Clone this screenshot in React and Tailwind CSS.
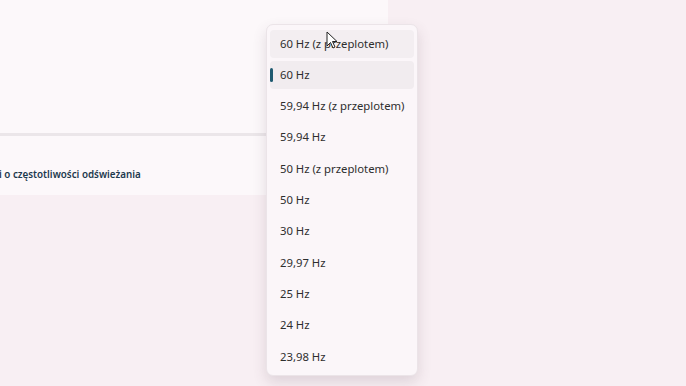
import React from 'react'

const rates = [
  '60 Hz (z przeplotem)',
  '60 Hz',
  '59,94 Hz (z przeplotem)',
  '59,94 Hz',
  '50 Hz (z przeplotem)',
  '50 Hz',
  '30 Hz',
  '29,97 Hz',
  '25 Hz',
  '24 Hz',
  '23,98 Hz',
]

function Cursor() {
  return (
    <svg className="absolute left-[326px] top-[31px]" width="12" height="18" viewBox="0 0 12 18">
      <path d="M1 1 L1 15 L4.5 11.5 L7 17 L9 16 L6.5 10.5 L11 10.5 Z" fill="#ffffff" stroke="#222" strokeWidth="1" strokeLinejoin="round" />
    </svg>
  )
}

export default function App() {
  return (
    <div
      className="relative w-[686px] h-[386px] overflow-hidden bg-[#f8eff3]"
      style={{ fontFamily: '"Noto Sans", "Open Sans", sans-serif' }}
    >
      {/* settings panel behind the flyout */}
      <div className="w-[388px] flex flex-col">
        <div className="h-[133px] bg-[#fcf8fa]"></div>
        <div className="h-[3px] bg-[#ebe6e9]"></div>
        <div className="h-[59px] bg-[#fcf8fa] flex items-center pt-[19px]">
          <span className="ml-[-1px] text-[9.8px] font-semibold text-[#1d3a4e] whitespace-nowrap">
            i o częstotliwości odświeżania
          </span>
        </div>
      </div>

      {/* flyout */}
      <div className="absolute left-[266px] top-[24px] w-[152px] h-[352px] rounded-[7px] bg-[#fbf6f9] border border-[#ebe4e8] shadow-[0_6px_14px_rgba(90,60,80,0.16)] px-[3px] pt-[5px] flex flex-col gap-[3.3px]">
        {rates.map((r, i) => (
          <div
            key={r}
            className={`relative h-[28px] shrink-0 rounded-[4px] flex items-center pl-[10px] text-[11.3px] text-[#2e2e2e] whitespace-nowrap ${
              i === 0 ? 'bg-[#f3eef1]' : i === 1 ? 'bg-[#f1ecef]' : ''
            }`}
          >
            {i === 1 && (
              <span className="absolute left-0 top-[7px] w-[3px] h-[14px] rounded-full bg-[#1f5a70]"></span>
            )}
            {r}
          </div>
        ))}
      </div>

      <Cursor />
    </div>
  )
}
